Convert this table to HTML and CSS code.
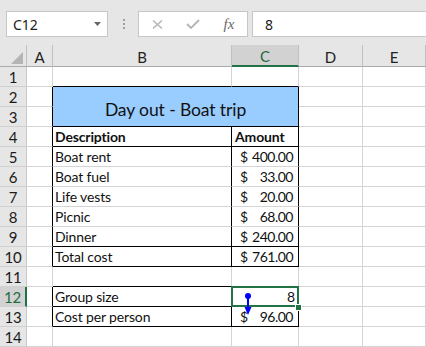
FILE: index.html
```html
<!DOCTYPE html>
<html>
<head>
<meta charset="utf-8">
<link rel="stylesheet" href="styles.css">
</head>
<body>
<div class="app">
  <div class="toolbar">
    <div class="namebox"><span>C12</span><svg class="dd" width="7" height="4" viewBox="0 0 7 4"><polygon points="0,0 7,0 3.5,4" fill="#666"/></svg></div>
    <div class="dots"><i></i><i></i><i></i></div>
    <div class="fxbox">
      <span class="btn"><svg width="11" height="9" viewBox="0 0 11 9"><path d="M1 0.5 L10 8.5 M10 0.5 L1 8.5" stroke="#b4b4b4" stroke-width="1.4" fill="none"/></svg></span>
      <span class="btn"><svg width="14" height="10" viewBox="0 0 14 10"><path d="M1 5 L5 9 L13 1" stroke="#b4b4b4" stroke-width="1.8" fill="none"/></svg></span>
      <span class="btn fx">fx</span>
    </div>
    <div class="formula">8</div>
  </div>
  <div class="sheet">
    <div class="corner"><span class="tri"></span></div>
    <div class="ch">A</div><div class="ch">B</div><div class="ch sel">C</div><div class="ch">D</div><div class="ch">E</div>

    <div class="rh">1</div><div class="c"></div><div class="c kb"></div><div class="c kb"></div><div class="c"></div><div class="c"></div>

    <div class="rh">2</div><div class="c kr"></div><div class="c title kr kb">Day out - Boat trip</div><div class="c"></div><div class="c"></div>
    <div class="rh">3</div><div class="c kr"></div><div class="c"></div><div class="c"></div>

    <div class="rh">4</div><div class="c kr"></div><div class="c kr kb b">Description</div><div class="c kr kb b hd">Amount</div><div class="c"></div><div class="c"></div>

    <div class="rh">5</div><div class="c kr"></div><div class="c kr">Boat rent</div><div class="c kr acc"><span>$</span><span class="n">400.00</span></div><div class="c"></div><div class="c"></div>
    <div class="rh">6</div><div class="c kr"></div><div class="c kr">Boat fuel</div><div class="c kr acc"><span>$</span><span class="n">33.00</span></div><div class="c"></div><div class="c"></div>
    <div class="rh">7</div><div class="c kr"></div><div class="c kr">Life vests</div><div class="c kr acc"><span>$</span><span class="n">20.00</span></div><div class="c"></div><div class="c"></div>
    <div class="rh">8</div><div class="c kr"></div><div class="c kr">Picnic</div><div class="c kr acc"><span>$</span><span class="n">68.00</span></div><div class="c"></div><div class="c"></div>
    <div class="rh">9</div><div class="c kr"></div><div class="c kr kb">Dinner</div><div class="c kr kb acc"><span>$</span><span class="n">240.00</span></div><div class="c"></div><div class="c"></div>
    <div class="rh">10</div><div class="c kr"></div><div class="c kr kb">Total cost</div><div class="c kr kb acc"><span>$</span><span class="n">761.00</span></div><div class="c"></div><div class="c"></div>

    <div class="rh">11</div><div class="c"></div><div class="c kb"></div><div class="c kb"></div><div class="c"></div><div class="c"></div>

    <div class="rh sel">12</div><div class="c kr"></div><div class="c kr kb">Group size</div><div class="c kr kb num active">8<span class="selbox"></span><span class="handle"></span><svg class="trace" width="12" height="26" viewBox="0 0 12 26"><circle cx="6" cy="4" r="3" fill="#0000ff"/><line x1="6" y1="4" x2="6" y2="17" stroke="#0000ff" stroke-width="2"/><polygon points="2.5,15 9.5,15 6,23" fill="#0000ff"/></svg></div><div class="c"></div><div class="c"></div>
    <div class="rh">13</div><div class="c kr"></div><div class="c kr kb">Cost per person</div><div class="c kr kb acc"><span>$</span><span class="n">96.00</span></div><div class="c"></div><div class="c"></div>

    <div class="rh">14</div><div class="c"></div><div class="c"></div><div class="c"></div><div class="c"></div><div class="c"></div>
  </div>
</div>
</body>
</html>
```
FILE: styles.css
```css
html, body {
  margin: 0;
  padding: 0;
  background: #ffffff;
  overflow: hidden;
}

.app {
  width: 426px;
  height: 347px;
  overflow: hidden;
}

.toolbar {
  height: 45px;
  box-sizing: border-box;
  background: #e6e6e6;
  display: flex;
  align-items: flex-start;
  padding-top: 11px;
  font-family: "Noto Sans", sans-serif;
  font-size: 14px;
  color: #222;
  overflow: hidden;
}

.toolbar > * {
  flex-shrink: 0;
}

.namebox {
  margin-left: 6px;
  width: 102px;
  height: 26px;
  box-sizing: border-box;
  background: #fff;
  border: 1px solid #c6c6c6;
  display: flex;
  align-items: center;
  justify-content: space-between;
  padding: 0 6px;
}

.dots {
  margin-left: 15px;
  margin-right: 13px;
  padding-top: 8px;
  display: flex;
  flex-direction: column;
  gap: 2px;
}

.dots i {
  display: block;
  width: 2px;
  height: 2px;
  background: #a0a0a0;
}

.fxbox {
  width: 110px;
  height: 26px;
  box-sizing: border-box;
  background: #fff;
  border: 1px solid #c6c6c6;
  display: flex;
}

.btn {
  width: 36px;
  display: flex;
  align-items: center;
  justify-content: center;
}

.fx {
  font-family: "Liberation Serif", serif;
  font-style: italic;
  font-size: 15px;
  color: #6a6a6a;
}

.formula {
  margin-left: 4px;
  width: 200px;
  height: 26px;
  box-sizing: border-box;
  background: #fff;
  border: 1px solid #c6c6c6;
  padding-left: 12px;
  display: flex;
  align-items: center;
}

.sheet {
  display: grid;
  grid-template-columns: 27px 26px 179px 67px 64px 1fr;
  grid-template-rows: 22px repeat(14, 20px);
  font-family: Lato, "Liberation Sans", sans-serif;
  font-size: 14px;
  letter-spacing: -0.15px;
  color: #111;
}

.sheet > div {
  box-sizing: border-box;
  border-right: 1px solid #d4d4d4;
  border-bottom: 1px solid #d4d4d4;
  white-space: nowrap;
}

.corner {
  background: #e6e6e6;
  position: relative;
  border-right-color: #c0c0c0 !important;
  border-bottom-color: #ababab !important;
}

.tri {
  position: absolute;
  right: 3px;
  bottom: 2px;
  width: 0;
  height: 0;
  border-left: 12px solid transparent;
  border-bottom: 12px solid #b4b4b4;
}

.ch {
  background: #e6e6e6;
  border-right-color: #c0c0c0 !important;
  border-bottom-color: #ababab !important;
  display: flex;
  align-items: center;
  justify-content: center;
  padding-top: 2px;
  font-size: 15px;
  color: #222;
}

.ch.sel {
  background: #d2d2d2;
  border-bottom: 2px solid #217346 !important;
  color: #1e6b40;
}

.rh {
  background: #e6e6e6;
  border-right-color: #c8c8c8 !important;
  border-bottom-color: #d0d0d0 !important;
  display: flex;
  align-items: center;
  justify-content: center;
  font-size: 15px;
  color: #1a1a1a;
}

.rh.sel {
  background: #d2d2d2;
  border-right: 2px solid #217346 !important;
  color: #1e6b40;
}

.c {
  display: flex;
  align-items: flex-end;
  padding-left: 2px;
  line-height: 18px;
}

.kr { border-right-color: #000 !important; }
.kb { border-bottom-color: #000 !important; }

.b { font-weight: bold; }
.hd { padding-left: 3px; }

.title {
  grid-column: span 2;
  grid-row: span 2;
  background: #99ccff;
  justify-content: center;
  align-items: center;
  font-size: 17.5px;
  letter-spacing: -0.1px;
  padding-top: 6px;
  padding-left: 0;
}

.acc {
  justify-content: space-between;
  padding-left: 8px;
  padding-right: 5px;
}

.acc .n {
  letter-spacing: -0.5px;
}

.num {
  justify-content: flex-end;
  padding-right: 3px;
}

.active {
  position: relative;
  z-index: 2;
  overflow: visible;
}

.selbox {
  position: absolute;
  left: -1px;
  top: -1px;
  right: -1px;
  bottom: -1px;
  border: 2px solid #217346;
  pointer-events: none;
}

.handle {
  position: absolute;
  left: 63px;
  top: 17px;
  width: 7px;
  height: 7px;
  box-sizing: border-box;
  background: #217346;
  border: 1px solid #fff;
}

.trace {
  position: absolute;
  left: 10px;
  top: 5px;
}
```
